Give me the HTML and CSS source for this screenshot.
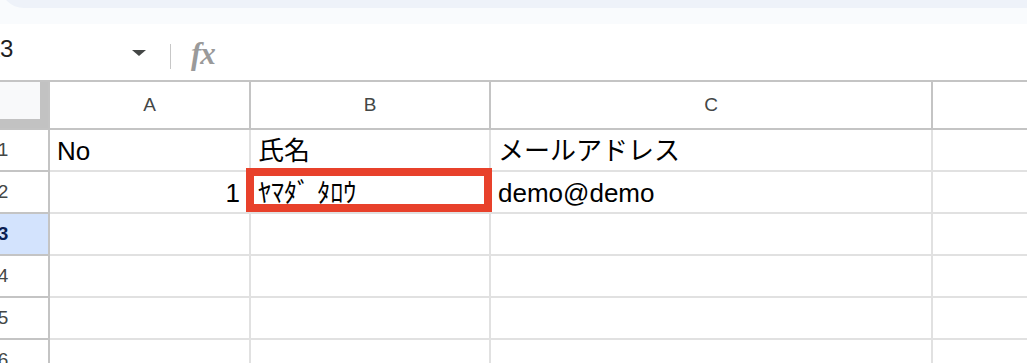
FILE: index.html
```html
<!DOCTYPE html>
<html>
<head>
    <title>Sheet</title>
    <link rel="stylesheet" href="styles.css">
</head>
<body>
    <div class="top-strip">
        <div class="toolbar-edge"></div>
    </div>

    <div class="formula-bar">
        <div class="name-box">
            <span class="name-text">A3</span>
            <span class="caret"></span>
        </div>
        <div class="divider"></div>
        <div class="fx">fx</div>
    </div>

    <div class="sheet">
        <!-- header row -->
        <div class="corner"><div class="corner-inner"></div></div>
        <div class="col-head">A</div>
        <div class="col-head">B</div>
        <div class="col-head">C</div>
        <div class="col-head"></div>

        <div class="row-head">1</div>
        <div class="cell">No</div>
        <div class="cell">氏名</div>
        <div class="cell">メールアドレス</div>
        <div class="cell"></div>

        <div class="row-head">2</div>
        <div class="cell num">1</div>
        <div class="cell marked">ﾔﾏﾀﾞ ﾀﾛｳ<span class="highlight-box"></span></div>
        <div class="cell">demo@demo</div>
        <div class="cell"></div>

        <div class="row-head selected">3</div>
        <div class="cell"></div>
        <div class="cell"></div>
        <div class="cell"></div>
        <div class="cell"></div>

        <div class="row-head">4</div>
        <div class="cell"></div>
        <div class="cell"></div>
        <div class="cell"></div>
        <div class="cell"></div>

        <div class="row-head">5</div>
        <div class="cell"></div>
        <div class="cell"></div>
        <div class="cell"></div>
        <div class="cell"></div>

        <div class="row-head">6</div>
        <div class="cell"></div>
        <div class="cell"></div>
        <div class="cell"></div>
        <div class="cell"></div>
    </div>
</body>
</html>
```

FILE: styles.css
```css
body {
    margin: 0;
    font-family: "Liberation Sans", Arial, "Noto Sans CJK JP", sans-serif;
    background-color: #fff;
    overflow: hidden;
}

.top-strip {
    height: 24px;
    background-color: #f9fbfd;
    overflow: hidden;
}
.toolbar-edge {
    height: 32px;
    margin-top: -24px;
    background-color: #eef2f9;
    border-bottom-left-radius: 24px;
}

.formula-bar {
    height: 56px;
    display: flex;
    align-items: center;
}
.name-box {
    width: 162px;
    margin-left: -16px;
    display: flex;
    align-items: center;
    justify-content: space-between;
    font-size: 24px;
    color: #1f1f1f;
}
.name-text {
    margin-top: -6px;
}
.caret {
    width: 0;
    height: 0;
    border-left: 7.5px solid transparent;
    border-right: 7.5px solid transparent;
    border-top: 6px solid #444746;
    margin-top: 1px;
}
.divider {
    width: 1px;
    height: 25px;
    margin-left: 24px;
    margin-top: 9px;
    background-color: #c7c7c7;
}
.fx {
    margin-left: 20px;
    margin-top: 4px;
    font-family: "Liberation Serif", serif;
    font-style: italic;
    font-weight: bold;
    font-size: 31px;
    letter-spacing: -1px;
    color: #9a9a9a;
}

.sheet {
    display: grid;
    grid-template-columns: 92px 201px 240px 442px 200px;
    grid-template-rows: 48px;
    grid-auto-rows: 42px;
    margin-left: -42px;
    border-top: 2px solid #c4c4c4;
}
.sheet > div {
    box-sizing: border-box;
}

.corner {
    border-right: 2px solid #c4c4c4;
    border-bottom: 2px solid #c4c4c4;
    background-color: #c2c2c2;
    padding: 0 8px 9px 0;
}
.corner-inner {
    height: 100%;
    background-color: #f8f9fa;
}

.col-head {
    display: flex;
    align-items: center;
    justify-content: center;
    font-size: 19px;
    color: #444746;
    border-right: 2px solid #c4c4c4;
    border-bottom: 2px solid #c4c4c4;
}

.row-head {
    display: flex;
    align-items: center;
    justify-content: center;
    font-size: 19px;
    color: #444746;
    border-right: 2px solid #c4c4c4;
    border-bottom: 2px solid #c4c4c4;
}
.row-head.selected {
    background-color: #d3e3fd;
    color: #0b1f53;
    font-weight: bold;
}

.cell {
    position: relative;
    display: flex;
    align-items: flex-end;
    padding: 0 8px 6px 7px;
    font-size: 26px;
    line-height: 26px;
    color: #000;
    white-space: nowrap;
    border-right: 2px solid #e1e1e1;
    border-bottom: 2px solid #e1e1e1;
}
.cell.num {
    justify-content: flex-end;
    padding-right: 9px;
}

.highlight-box {
    position: absolute;
    top: -4px;
    left: -5px;
    right: -3px;
    bottom: 0;
    border: 8px solid #e8412b;
}
```
